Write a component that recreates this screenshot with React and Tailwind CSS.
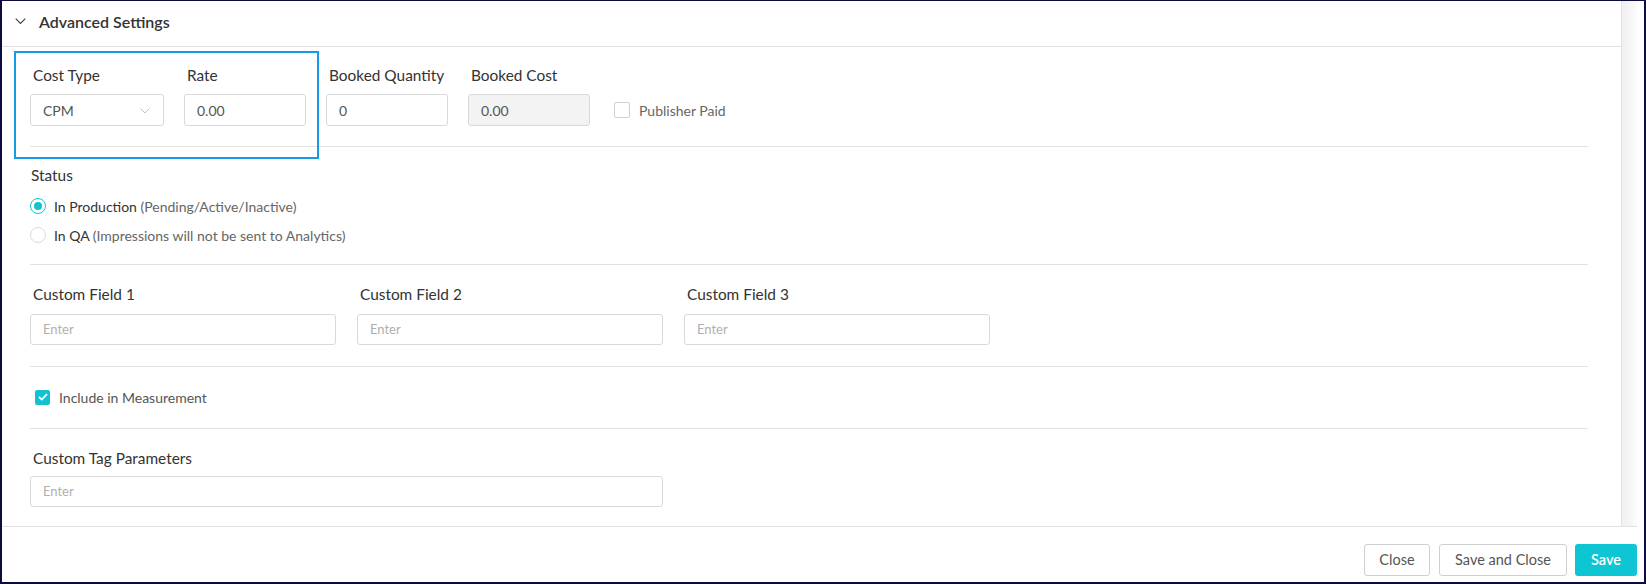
import React from "react";

function Label({ children, className = "" }) {
  return (
    <div className={"h-5 leading-5 text-[15.4px] text-[#333] pl-[3px] whitespace-nowrap " + className}>
      {children}
    </div>
  );
}

function Box({ value, placeholder, w, h = "h-[32px]", disabled, select }) {
  return (
    <div
      className={
        "flex items-center justify-between rounded-[3px] border border-[#d9d9d9] pl-[12px] pr-[13px] " +
        h +
        " " +
        w +
        " " +
        (disabled ? "bg-[#f3f3f3]" : "bg-white")
      }
    >
      {value ? (
        <span className="text-[14px] text-[#555]">{value}</span>
      ) : (
        <span className="text-[13px] text-[#b0b0b0]">{placeholder}</span>
      )}
      {select && (
        <svg width="10" height="6" viewBox="0 0 10 6" className="mt-[2px]">
          <polyline points="0.5,0.5 5,5 9.5,0.5" fill="none" stroke="#c4c4c4" strokeWidth="1" />
        </svg>
      )}
    </div>
  );
}

function Field({ label, children }) {
  return (
    <div className="flex flex-col">
      <Label>{label}</Label>
      <div className="mt-[9px]">{children}</div>
    </div>
  );
}

function Radio({ checked }) {
  return checked ? (
    <div className="w-4 h-4 rounded-full border-[1.5px] border-[#14c1d1] bg-white flex items-center justify-center">
      <div className="w-[8px] h-[8px] rounded-full bg-[#14c1d1]" />
    </div>
  ) : (
    <div className="w-4 h-4 rounded-full border border-[#dcdcdc] bg-white" />
  );
}

export default function App() {
  return (
    <div className="w-[1646px] h-[584px] bg-white border-[#0c0c3e] border-t border-x-2 border-b-2 flex font-[Lato,'Open_Sans',sans-serif] text-[#333] overflow-hidden">
      <div className="flex flex-col w-[1635px]">
        <div className="flex h-[525px]">
          <div className="flex-1 relative flex flex-col">
            {/* Header */}
            <div className="h-[46px] border-b border-[#e2e2e2] flex items-center pl-[13px] pb-[4px]">
              <svg width="11" height="7" viewBox="0 0 11 7">
                <polyline points="0.7,0.7 5.5,5.5 10.3,0.7" fill="none" stroke="#444" strokeWidth="1.2" />
              </svg>
              <span className="ml-[13px] text-[16px] font-semibold text-[#333]">Advanced Settings</span>
            </div>

            {/* highlight */}
            <div className="absolute left-[12px] top-[50px] w-[305px] h-[108px] border-2 border-[#149be5]" />

            <div className="pl-[28px] pr-[33px] flex flex-col">
              {/* Section 1 */}
              <div className="pt-[18px] pb-[20px] border-b border-[#e2e2e2] flex items-end gap-[20px]">
                <Field label="Cost Type">
                  <Box value="CPM" w="w-[134px]" select />
                </Field>
                <Field label="Rate">
                  <Box value="0.00" w="w-[122px]" />
                </Field>
                <Field label="Booked Quantity">
                  <Box value="0" w="w-[122px]" />
                </Field>
                <Field label="Booked Cost">
                  <Box value="0.00" w="w-[122px]" disabled />
                </Field>
                <div className="h-[32px] flex items-center ml-[4px]">
                  <div className="w-4 h-4 border border-[#d0d0d0] rounded-[2px] bg-white" />
                  <span className="ml-[9px] text-[14px] text-[#666]">Publisher Paid</span>
                </div>
              </div>

              {/* Section 2 */}
              <div className="pt-[18px] pb-[19px] border-b border-[#e2e2e2] flex flex-col">
                <div className="h-5 leading-5 text-[15.4px] text-[#333] pl-[1px]">Status</div>
                <div className="mt-[11px] h-5 flex items-center">
                  <Radio checked />
                  <span className="ml-[8px] text-[14px] text-[#333]">
                    In Production <span className="text-[#666]">(Pending/Active/Inactive)</span>
                  </span>
                </div>
                <div className="mt-[9px] h-5 flex items-center">
                  <Radio />
                  <span className="ml-[8px] text-[14px] text-[#333]">
                    In QA <span className="text-[#666]">(Impressions will not be sent to Analytics)</span>
                  </span>
                </div>
              </div>

              {/* Section 3 */}
              <div className="pt-[19px] pb-[21px] border-b border-[#e2e2e2] flex gap-[21px]">
                {["Custom Field 1", "Custom Field 2", "Custom Field 3"].map((l) => (
                  <div key={l} className="flex flex-col">
                    <Label>{l}</Label>
                    <div className="mt-[10px]">
                      <Box placeholder="Enter" w="w-[306px]" h="h-[31px]" />
                    </div>
                  </div>
                ))}
              </div>

              {/* Section 4 */}
              <div className="pt-[20px] pb-[21px] border-b border-[#e2e2e2]">
                <div className="h-5 flex items-center pl-[5px]">
                  <div className="w-[15px] h-[15px] rounded-[2px] bg-[#14c1d1] flex items-center justify-center">
                    <svg width="10" height="8" viewBox="0 0 10 8">
                      <polyline points="1,4 3.8,6.6 9,1.2" fill="none" stroke="#fff" strokeWidth="1.8" />
                    </svg>
                  </div>
                  <span className="ml-[9px] text-[14px] text-[#555]">Include in Measurement</span>
                </div>
              </div>

              {/* Section 5 */}
              <div className="pt-[19px] flex flex-col">
                <Label>Custom Tag Parameters</Label>
                <div className="mt-[8px]">
                  <Box placeholder="Enter" w="w-[633px]" h="h-[31px]" />
                </div>
              </div>
            </div>
          </div>
          <div className="w-[16px] border-l border-[#e4e4e4] bg-gradient-to-r from-[#f0f0f0] to-[#fbfbfb]" />
        </div>

        {/* Footer */}
        <div className="flex-1 border-t border-[#e2e2e2] flex justify-end items-start pt-[17px]">
          <button className="w-[66px] h-[32px] border border-[#cfcfcf] rounded-[3px] bg-white text-[14.5px] text-[#555]">
            Close
          </button>
          <button className="ml-[9px] w-[128px] h-[32px] border border-[#cfcfcf] rounded-[3px] bg-white text-[14.5px] text-[#555]">
            Save and Close
          </button>
          <button className="ml-[8px] w-[62px] h-[32px] rounded-[3px] bg-[#0ec5d4] text-[14.5px] font-semibold text-white">
            Save
          </button>
        </div>
      </div>
      <div className="flex-1 bg-white" />
    </div>
  );
}
